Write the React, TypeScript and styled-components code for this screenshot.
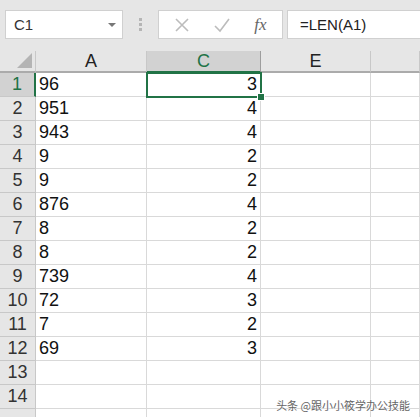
import React from 'react';
import styled, { createGlobalStyle } from 'styled-components';

const GlobalStyle = createGlobalStyle`
  html, body {
    margin: 0;
    padding: 0;
    background: #ffffff;
    font-family: "Liberation Sans", Arial, sans-serif;
    overflow: hidden;
  }
`;

const columns = ['A', 'C', 'E', ''];
const values = [96, 951, 943, 9, 9, 876, 8, 8, 739, 72, 7, 69];
// the LEN results as they show in the sheet
const lengths = [3, 4, 4, 2, 2, 4, 2, 2, 4, 3, 2, 3];

const Page = styled.div`
  width: 420px;
  height: 417px;
  position: relative;
  overflow: hidden;
`;

const FormulaBar = styled.div`
  height: 51px;
  background: #e6e6e6;
  display: flex;
  align-items: flex-start;
  padding: 10px 0 0 5px;
  box-sizing: border-box;
`;

const NameBox = styled.div`
  width: 118px;
  height: 29px;
  box-sizing: border-box;
  background: #fff;
  border: 1px solid #d0d0d0;
  display: flex;
  align-items: center;
  justify-content: space-between;
  padding: 0 6px 0 8px;
  font-size: 15px;
  color: #333;
`;

const Caret = styled.span`
  width: 0;
  height: 0;
  border-left: 4px solid transparent;
  border-right: 4px solid transparent;
  border-top: 4px solid #777;
`;

const Grip = styled.div`
  width: 35px;
  height: 29px;
  display: flex;
  flex-direction: column;
  align-items: center;
  justify-content: center;
  gap: 2px;
  span {
    width: 3px;
    height: 3px;
    background: #b5b5b5;
  }
`;

const ButtonBox = styled.div`
  width: 125px;
  height: 29px;
  box-sizing: border-box;
  background: #fff;
  border: 1px solid #d0d0d0;
  display: flex;
  align-items: center;
  justify-content: space-around;
  padding: 0 4px;
`;

const Fx = styled.span`
  font-family: "Liberation Serif", "Times New Roman", serif;
  font-style: italic;
  font-size: 17px;
  color: #666;
`;

const FormulaInput = styled.div`
  flex: 1;
  height: 29px;
  margin-left: 4px;
  box-sizing: border-box;
  background: #fff;
  border: 1px solid #d0d0d0;
  border-right: none;
  display: flex;
  align-items: center;
  padding-left: 12px;
  font-size: 15px;
  color: #222;
`;

const Grid = styled.div`
  display: grid;
  grid-template-columns: 36px 111px 114px 110px 1fr;
  grid-auto-rows: 24px;
  grid-template-rows: 22px;
  position: relative;
`;

const HeadCell = styled.div<{ $selected?: boolean }>`
  background: ${(p) => (p.$selected ? '#d2d2d2' : '#e6e6e6')};
  border-right: 1px solid ${(p) => (p.$selected ? '#9e9e9e' : '#c8c8c8')};
  border-bottom: 2px solid ${(p) => (p.$selected ? '#217346' : '#ababab')};
  box-sizing: border-box;
  display: flex;
  align-items: center;
  justify-content: center;
  font-size: 18px;
  color: ${(p) => (p.$selected ? '#217346' : '#222')};
`;

const Corner = styled.div`
  background: #e6e6e6;
  border-right: 1px solid #c8c8c8;
  border-bottom: 2px solid #ababab;
  box-sizing: border-box;
  position: relative;
`;

const Triangle = styled.span`
  position: absolute;
  right: 3px;
  bottom: 3px;
  width: 0;
  height: 0;
  border-left: 15px solid transparent;
  border-bottom: 15px solid #b4b4b4;
`;

const RowHead = styled.div<{ $selected?: boolean }>`
  background: ${(p) => (p.$selected ? '#d2d2d2' : '#e6e6e6')};
  border-right: ${(p) => (p.$selected ? '2px solid #217346' : '1px solid #c8c8c8')};
  border-bottom: 1px solid #c8c8c8;
  box-sizing: border-box;
  display: flex;
  align-items: center;
  justify-content: center;
  font-size: 18px;
  color: ${(p) => (p.$selected ? '#217346' : '#333')};
`;

const Cell = styled.div<{ $align?: 'left' | 'right' }>`
  border-right: 1px solid #d9d9d9;
  border-bottom: 1px solid #d9d9d9;
  box-sizing: border-box;
  display: flex;
  align-items: center;
  justify-content: ${(p) => (p.$align === 'right' ? 'flex-end' : 'flex-start')};
  padding: 0 3px;
  font-size: 18px;
  color: #111;
  background: #fff;
`;

const Selection = styled.div`
  position: absolute;
  left: 146px;
  top: 21px;
  width: 116px;
  height: 26px;
  border: 2px solid #217346;
  box-sizing: border-box;
  pointer-events: none;
`;

const Handle = styled.span`
  position: absolute;
  right: -5px;
  bottom: -5px;
  width: 6px;
  height: 6px;
  background: #217346;
  border: 1px solid #fff;
`;

const Watermark = styled.div`
  position: absolute;
  right: 10px;
  bottom: 4px;
  font-family: "Noto Sans CJK SC", sans-serif;
  font-size: 11px;
  color: #666;
  text-shadow: 0 0 2px #fff, 0 0 2px #fff;
`;

const App: React.FC = () => {
  const rows = Array.from({ length: 15 }, (_, i) => i + 1);
  return (
    <Page>
      <GlobalStyle />
      <FormulaBar>
        <NameBox>
          C1
          <Caret />
        </NameBox>
        <Grip>
          <span />
          <span />
          <span />
        </Grip>
        <ButtonBox>
          <svg width="16" height="16" viewBox="0 0 16 16">
            <path d="M2 2 L14 14 M14 2 L2 14" stroke="#bcbcbc" strokeWidth="1.6" fill="none" />
          </svg>
          <svg width="18" height="16" viewBox="0 0 18 16">
            <path d="M2 9 L7 14 L16 2" stroke="#bcbcbc" strokeWidth="1.6" fill="none" />
          </svg>
          <Fx>fx</Fx>
        </ButtonBox>
        <FormulaInput>=LEN(A1)</FormulaInput>
      </FormulaBar>
      <Grid>
        <Corner>
          <Triangle />
        </Corner>
        {columns.map((c) => (
          <HeadCell key={c || 'f'} $selected={c === 'C'}>
            {c}
          </HeadCell>
        ))}
        {rows.map((r) => (
          <React.Fragment key={r}>
            <RowHead $selected={r === 1}>{r <= 14 ? r : ''}</RowHead>
            <Cell>{values[r - 1] ?? ''}</Cell>
            <Cell $align="right">{lengths[r - 1] ?? ''}</Cell>
            <Cell />
            <Cell />
          </React.Fragment>
        ))}
        <Selection>
          <Handle />
        </Selection>
      </Grid>
      <Watermark>头条 @跟小小筱学办公技能</Watermark>
    </Page>
  );
};

export default App;
